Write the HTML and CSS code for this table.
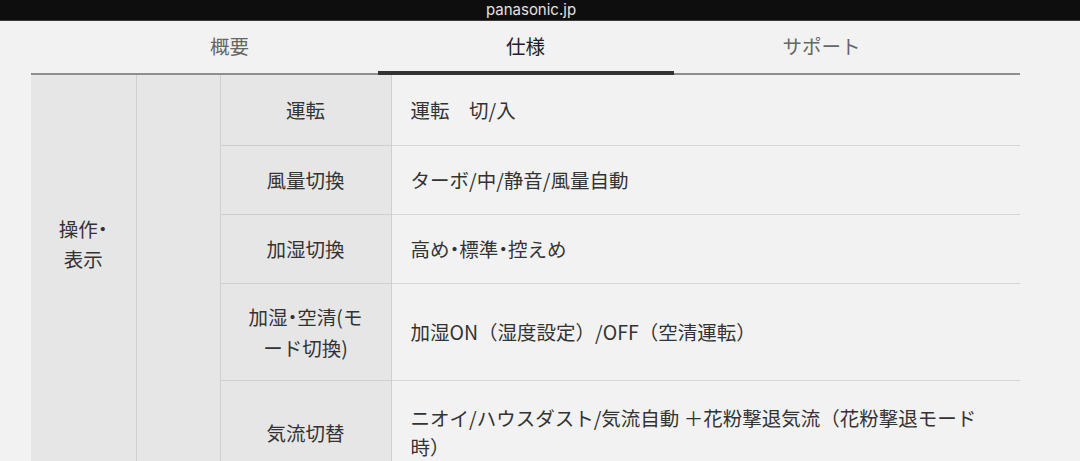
FILE: index.html
```html
<!DOCTYPE html>
<html lang="ja">
<head>
<meta charset="utf-8">
<title>仕様</title>
<link rel="stylesheet" href="styles.css">
</head>
<body>
<div class="topbar">panasonic.jp</div>
<nav class="tabs">
  <a class="tab">概要</a>
  <a class="tab active">仕様</a>
  <a class="tab">サポート</a>
</nav>
<table class="spec">
  <colgroup>
    <col class="c1"><col class="c2"><col class="c3"><col class="c4">
  </colgroup>
  <tbody>
    <tr class="r0">
      <th class="group" rowspan="5">操作・表示</th>
      <th class="sub" rowspan="5"></th>
      <th class="label">運転</th>
      <td class="value">運転　切/入</td>
    </tr>
    <tr class="r1">
      <th class="label">風量切換</th>
      <td class="value">ターボ/中/静音/風量自動</td>
    </tr>
    <tr class="r1">
      <th class="label">加湿切換</th>
      <td class="value half">高め・標準・控えめ</td>
    </tr>
    <tr class="r4">
      <th class="label">加湿・空清(モード切換)</th>
      <td class="value">加湿ON（湿度設定）/OFF（空清運転）</td>
    </tr>
    <tr class="r5">
      <th class="label">気流切替</th>
      <td class="value">ニオイ/ハウスダスト/気流自動 ＋花粉撃退気流（花粉撃退モード時）</td>
    </tr>
  </tbody>
</table>
</body>
</html>
```
FILE: styles.css
```css
html, body {
  margin: 0;
  padding: 0;
}
body {
  background: #f2f2f2;
  font-family: "Noto Sans CJK JP", "Noto Sans", sans-serif;
  color: #333;
  overflow: hidden;
}
.topbar {
  height: 20px;
  padding-right: 18px;
  background: #0e0e0e;
  border-bottom: 1px solid #3a3a3a;
  color: #e2e2e2;
  font-family: Inter, "Liberation Sans", sans-serif;
  font-size: 15px;
  line-height: 19px;
  text-align: center;
}
.tabs {
  margin-left: 31px;
  width: 989px;
  height: 52px;
  border-bottom: 2px solid #8e8e8e;
  display: flex;
  justify-content: center;
}
.tab {
  width: 296px;
  text-align: center;
  font-size: 19.5px;
  line-height: 50px;
  color: #666;
}
.tab.active {
  color: #1f1f1f;
  border-bottom: 4px solid #333;
  margin-bottom: -2px;
  height: 50px;
}
.spec {
  margin-left: 31px;
  width: 989px;
  table-layout: fixed;
  border-collapse: collapse;
  font-size: 19.5px;
}
.c1 { width: 105px; }
.c2 { width: 84px; }
.c3 { width: 171px; }
.c4 { width: 629px; }
.spec th {
  font-weight: normal;
  background: #e6e6e6;
  color: #333;
  border-right: 1px solid #cfcfcf;
  text-align: center;
  font-feature-settings: "halt";
}
.spec .group {
  vertical-align: top;
  padding: 139px 22px 0;
  line-height: 30px;
}
.spec .label {
  padding: 16px 22px;
  line-height: 31px;
  border-bottom: 1px solid #cfcfcf;
  vertical-align: middle;
}
.spec .value {
  padding: 16px 40px 16px 19px;
  line-height: 29px;
  border-bottom: 1px solid #d6d6d6;
  background: #f2f2f2;
  color: #333;
  vertical-align: middle;
}
.spec .value.half {
  font-feature-settings: "halt";
}
.r0 { height: 70px; }
.r1 { height: 69px; }
.r4 { height: 97px; }
.r5 { height: 104px; }
```
